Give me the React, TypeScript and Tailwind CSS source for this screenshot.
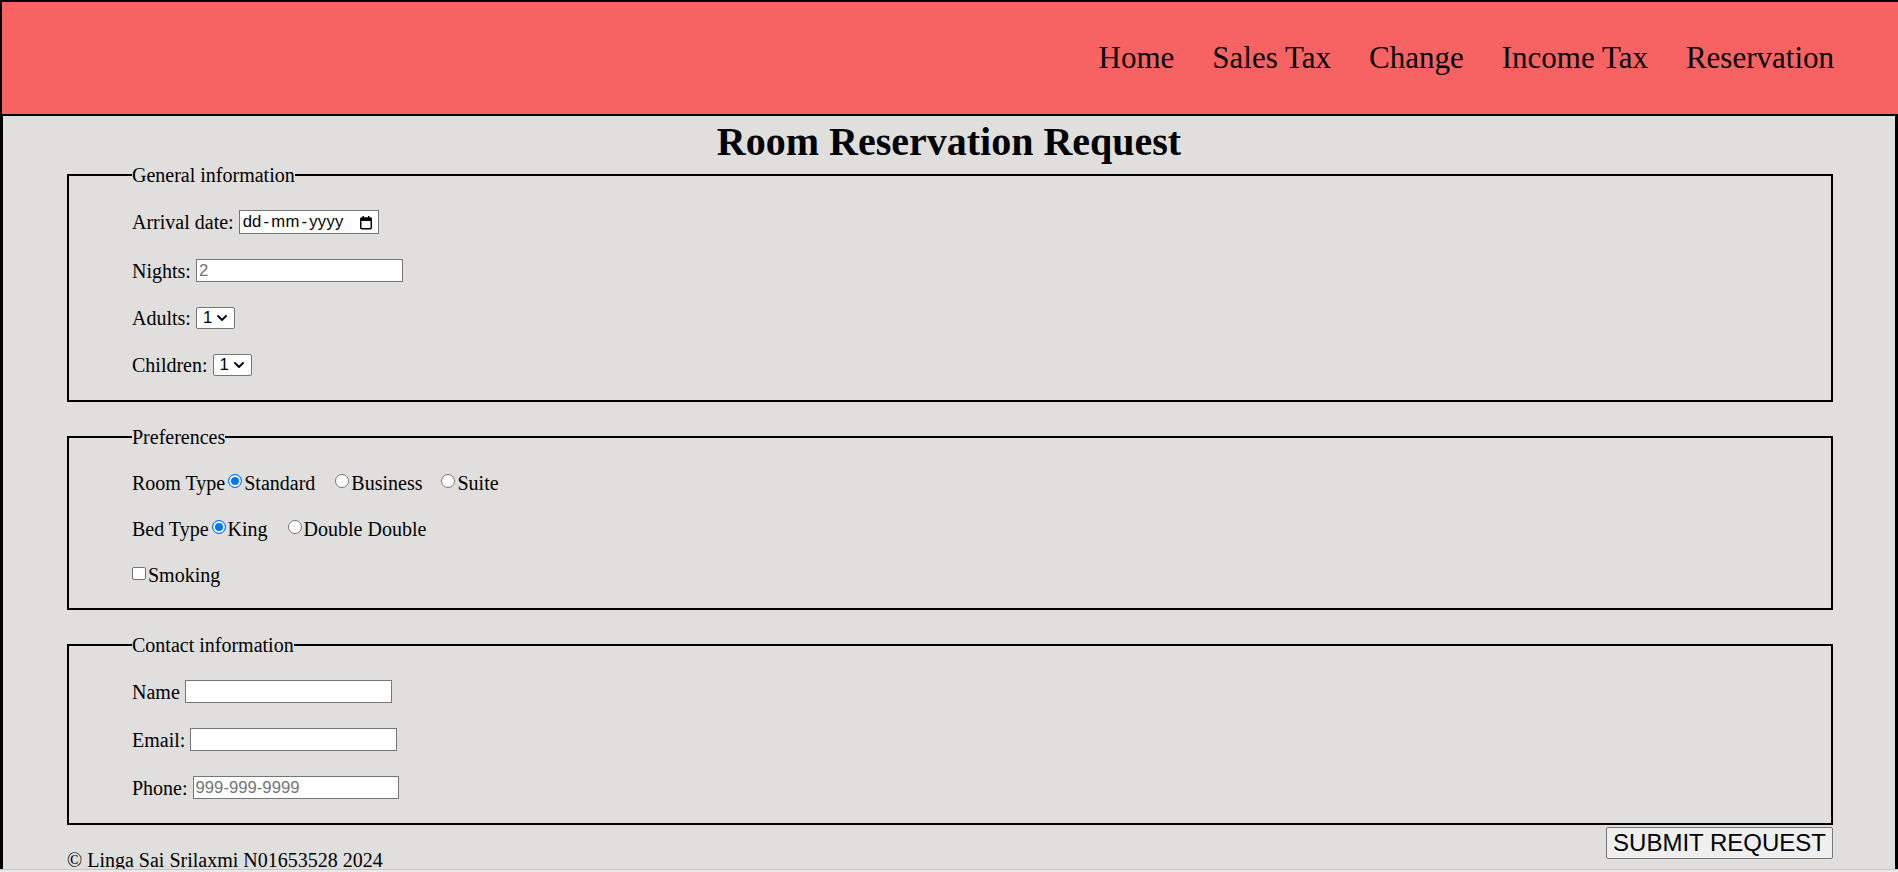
import React from 'react'

const navLinks = ['Home', 'Sales Tax', 'Change', 'Income Tax', 'Reservation']

function Chevron() {
  return (
    <svg width="10" height="6" viewBox="0 0 10 6" className="shrink-0">
      <path d="M1 1l4 4 4-4" fill="none" stroke="#000" strokeWidth="1.8" strokeLinecap="round" strokeLinejoin="round" />
    </svg>
  )
}

function CountSelect() {
  return (
    <div className="flex items-center h-[22px] w-[39px] border border-[#767676] rounded-[2px] bg-white pr-[6px]">
      <select
        defaultValue="1"
        className="appearance-none bg-transparent outline-none pl-[6px] w-[20px] text-[16.7px] leading-[20px] text-black font-['Liberation_Sans',Arial,sans-serif]"
      >
        <option value="1">1</option>
        <option value="2">2</option>
        <option value="3">3</option>
        <option value="4">4</option>
      </select>
      <Chevron />
    </div>
  )
}

function TextField({ width, placeholder }: { width: string; placeholder?: string }) {
  return (
    <input
      type="text"
      placeholder={placeholder}
      className={`${width} h-[23px] border border-[#767676] bg-white px-[2px] text-[16.7px] text-black placeholder:text-[#757575] outline-none font-['Liberation_Sans',Arial,sans-serif]`}
    />
  )
}

function Radio({ name, checked }: { name: string; checked?: boolean }) {
  return (
    <input
      type="radio"
      name={name}
      defaultChecked={checked}
      className="appearance-none shrink-0 m-0 mt-[1.5px] w-[14px] h-[14px] rounded-full border border-[#767676] bg-white checked:border-[#0075ff] checked:bg-[#0075ff] checked:shadow-[inset_0_0_0_2px_#ffffff]"
    />
  )
}

export default function App() {
  return (
    <div className="min-h-screen bg-[#e0dfde] text-black text-[20px] leading-[22px] font-['Liberation_Serif','Times_New_Roman',serif]">
      {/* header */}
      <header className="h-[116px] border-t-2 border-l-2 border-b-2 border-black bg-[#f76363] flex items-center justify-end pr-[64px]">
        <nav className="flex items-center gap-[38px] text-[31px] leading-[36px]">
          {navLinks.map((l) => (
            <a key={l} href="#" className="text-black">
              {l}
            </a>
          ))}
        </nav>
      </header>

      <main className="border-l-[3px] border-r-[3px] border-black pt-[3px] min-h-[756px]">
        <h1 className="text-center font-bold text-[40px] leading-[45px]">Room Reservation Request</h1>

        <form className="flex flex-col gap-[24px]">
          {/* General information */}
          <fieldset className="ml-[64px] mr-[62px] border-2 border-black pl-[63px] pt-[24px] pb-[24px]">
            <legend className="leading-[22px]">General information</legend>
            <div className="flex flex-col gap-[25px]">
              <div className="flex items-center gap-[5px]">
                <span>Arrival date:</span>
                <div className="flex items-center justify-between h-[24px] w-[140px] border border-[#767676] bg-white pl-[3px] pr-[5px] text-[16.7px] font-['Liberation_Sans',Arial,sans-serif]">
                  <span className="tracking-[0.2px]">
                    dd<span className="mx-[2px]">-</span>mm<span className="mx-[2px]">-</span>yyyy
                  </span>
                  <svg width="14" height="15" viewBox="0 0 14 15">
                    <rect x="1.75" y="3" width="10.5" height="10.75" rx="1" fill="none" stroke="#000" strokeWidth="1.5" />
                    <rect x="1.75" y="3" width="10.5" height="3" fill="#000" />
                    <rect x="3.5" y="1" width="1.5" height="2.5" fill="#000" />
                    <rect x="9" y="1" width="1.5" height="2.5" fill="#000" />
                  </svg>
                </div>
              </div>
              <div className="flex items-center gap-[5px]">
                <span>Nights:</span>
                <TextField width="w-[207px]" placeholder="2" />
              </div>
              <div className="flex items-center gap-[5px]">
                <span>Adults:</span>
                <CountSelect />
              </div>
              <div className="flex items-center gap-[5px]">
                <span>Children:</span>
                <CountSelect />
              </div>
            </div>
          </fieldset>

          {/* Preferences */}
          <fieldset className="ml-[64px] mr-[62px] border-2 border-black pl-[63px] pt-[24px] pb-[22px]">
            <legend className="leading-[22px]">Preferences</legend>
            <div className="flex flex-col gap-[24px]">
              <div className="flex items-start h-[22px]">
                <span>Room Type</span>
                <label className="flex items-start ml-[3px]">
                  <Radio name="room" checked />
                  <span className="ml-[2px]">Standard</span>
                </label>
                <label className="flex items-start ml-[20px]">
                  <Radio name="room" />
                  <span className="ml-[2px]">Business</span>
                </label>
                <label className="flex items-start ml-[19px]">
                  <Radio name="room" />
                  <span className="ml-[2px]">Suite</span>
                </label>
              </div>
              <div className="flex items-start h-[22px]">
                <span>Bed Type</span>
                <label className="flex items-start ml-[3px]">
                  <Radio name="bed" checked />
                  <span className="ml-[2px]">King</span>
                </label>
                <label className="flex items-start ml-[20px]">
                  <Radio name="bed" />
                  <span className="ml-[2px]">Double Double</span>
                </label>
              </div>
              <div className="flex items-start h-[22px]">
                <label className="flex items-start">
                  <input
                    type="checkbox"
                    className="appearance-none shrink-0 m-0 mt-[3px] w-[14px] h-[13px] rounded-[2px] border border-[#767676] bg-white"
                  />
                  <span className="ml-[2px]">Smoking</span>
                </label>
              </div>
            </div>
          </fieldset>

          {/* Contact information */}
          <fieldset className="ml-[64px] mr-[62px] border-2 border-black pl-[63px] pt-[24px] pb-[24px]">
            <legend className="leading-[22px]">Contact information</legend>
            <div className="flex flex-col gap-[25px]">
              <div className="flex items-center gap-[5px]">
                <span>Name</span>
                <TextField width="w-[207px]" />
              </div>
              <div className="flex items-center gap-[5px]">
                <span>Email:</span>
                <TextField width="w-[207px]" />
              </div>
              <div className="flex items-center gap-[5px]">
                <span>Phone:</span>
                <TextField width="w-[206px]" placeholder="999-999-9999" />
              </div>
            </div>
          </fieldset>
        </form>

        <div className="ml-[64px] mr-[62px] flex items-start justify-between">
          <p className="mt-[24px]">© Linga Sai Srilaxmi N01653528 2024</p>
          <button
            type="submit"
            className="mt-[2px] h-[32px] px-[6px] flex items-center border border-[#767676] rounded-[2px] bg-[#efefef] text-[24px] leading-[28px] text-black font-['Liberation_Sans',Arial,sans-serif]"
          >
            SUBMIT REQUEST
          </button>
        </div>
      </main>

      {/* scrollbar edge */}
      <div className="fixed bottom-0 left-0 right-0 h-[3px] bg-[#e9e9e9] border-t border-[#c6c6c6]"></div>
    </div>
  )
}
